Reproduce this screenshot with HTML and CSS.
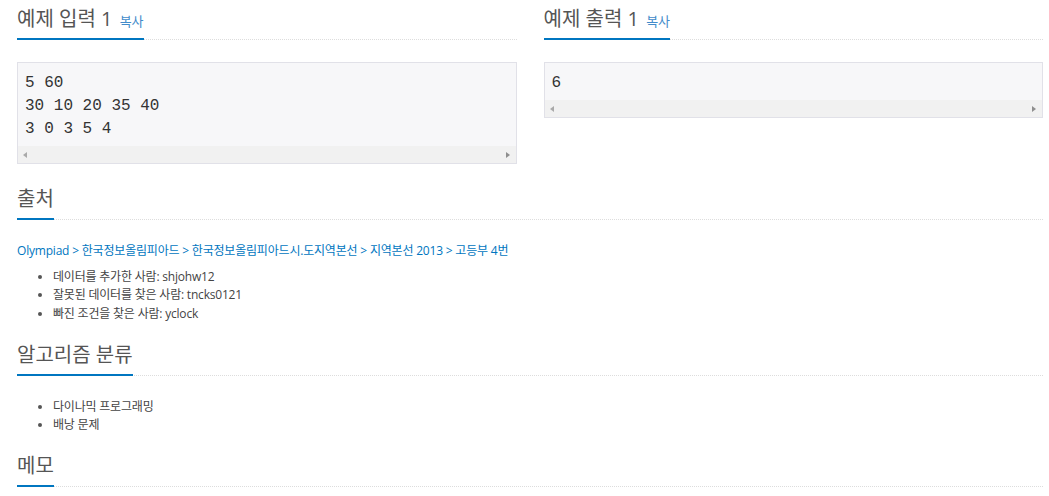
FILE: index.html
```html
<!DOCTYPE html>
<html lang="ko">
<head>
<meta charset="utf-8">
<title>예제</title>
<link rel="stylesheet" href="styles.css">
</head>
<body>
<div class="page">
  <div class="samples">
    <section class="sample">
      <div class="headline"><h2>예제 입력 1 <span class="copy">복사</span></h2></div>
      <div class="pre-box">
        <pre class="code">5 60
30 10 20 35 40
3 0 3 5 4</pre>
        <div class="hscroll"><span class="arrow arrow-left"></span><span class="arrow arrow-right"></span></div>
      </div>
    </section>
    <section class="sample">
      <div class="headline"><h2>예제 출력 1 <span class="copy">복사</span></h2></div>
      <div class="pre-box">
        <pre class="code">6</pre>
        <div class="hscroll"><span class="arrow arrow-left"></span><span class="arrow arrow-right"></span></div>
      </div>
    </section>
  </div>

  <section class="block">
    <div class="headline"><h2>출처</h2></div>
    <p class="source"><a href="#">Olympiad</a> &gt; <a href="#">한국정보올림피아드</a> &gt; <a href="#">한국정보올림피아드시.도지역본선</a> &gt; <a href="#">지역본선 2013</a> &gt; <a href="#">고등부 4번</a></p>
    <ul class="list">
      <li>데이터를 추가한 사람: shjohw12</li>
      <li>잘못된 데이터를 찾은 사람: tncks0121</li>
      <li>빠진 조건을 찾은 사람: yclock</li>
    </ul>
  </section>

  <section class="block">
    <div class="headline"><h2>알고리즘 분류</h2></div>
    <ul class="list">
      <li>다이나믹 프로그래밍</li>
      <li>배낭 문제</li>
    </ul>
  </section>

  <section class="block">
    <div class="headline"><h2>메모</h2></div>
  </section>
</div>
</body>
</html>
```

FILE: styles.css
```css
html, body {
  margin: 0;
  padding: 0;
  background: #fff;
}

body {
  font-family: "Open Sans", "Noto Sans CJK KR", sans-serif;
  font-size: 12px;
  line-height: 18.57px;
  color: #444;
  letter-spacing: -0.2px;
}

.page {
  width: 1026px;
  padding: 6px 0 0 17px;
}

.samples {
  display: grid;
  grid-template-columns: 1fr 1fr;
  column-gap: 27px;
  margin-bottom: 22px;
}

.headline {
  display: flex;
  align-items: flex-end;
  border-bottom: 1px dotted #ddd;
  margin-bottom: 22px;
}

.headline h2 {
  margin: 0 0 -1px 0;
  padding: 0 0 6px 0;
  border-bottom: 2px solid #0076c0;
  font-family: "Open Sans", "Noto Sans CJK KR", sans-serif;
  font-size: 20px;
  font-weight: 400;
  line-height: 26px;
  letter-spacing: 0;
  color: #555;
  white-space: nowrap;
}

.copy {
  margin-left: 2px;
  font-size: 13px;
  line-height: 1;
  color: #428bca;
}

.pre-box {
  border: 1px solid #e1e1e8;
  background: #f7f7f9;
}

.code {
  margin: 0;
  padding: 9px 7px 5px;
  font-family: "Liberation Mono", "DejaVu Sans Mono", monospace;
  font-size: 16px;
  line-height: 23px;
  letter-spacing: 0;
  color: #333;
  white-space: pre;
}

.hscroll {
  height: 17px;
  background: #f1f1f1;
  display: flex;
  align-items: center;
  justify-content: space-between;
  padding: 0 6px 0 5px;
}

.arrow {
  width: 0;
  height: 0;
  border-top: 3.5px solid transparent;
  border-bottom: 3.5px solid transparent;
}

.arrow-left {
  border-right: 4px solid #a9a9a9;
}

.arrow-right {
  border-left: 4px solid #8e8e8e;
}

.block {
  margin-bottom: 18.5px;
}

.source {
  margin: 0 0 7px 0;
  color: #0076c0;
}

.source a {
  color: #0076c0;
  text-decoration: none;
}

.list {
  margin: 0;
  padding-left: 36px;
  color: #444;
}

.list li::marker {
  color: #555;
}
```
